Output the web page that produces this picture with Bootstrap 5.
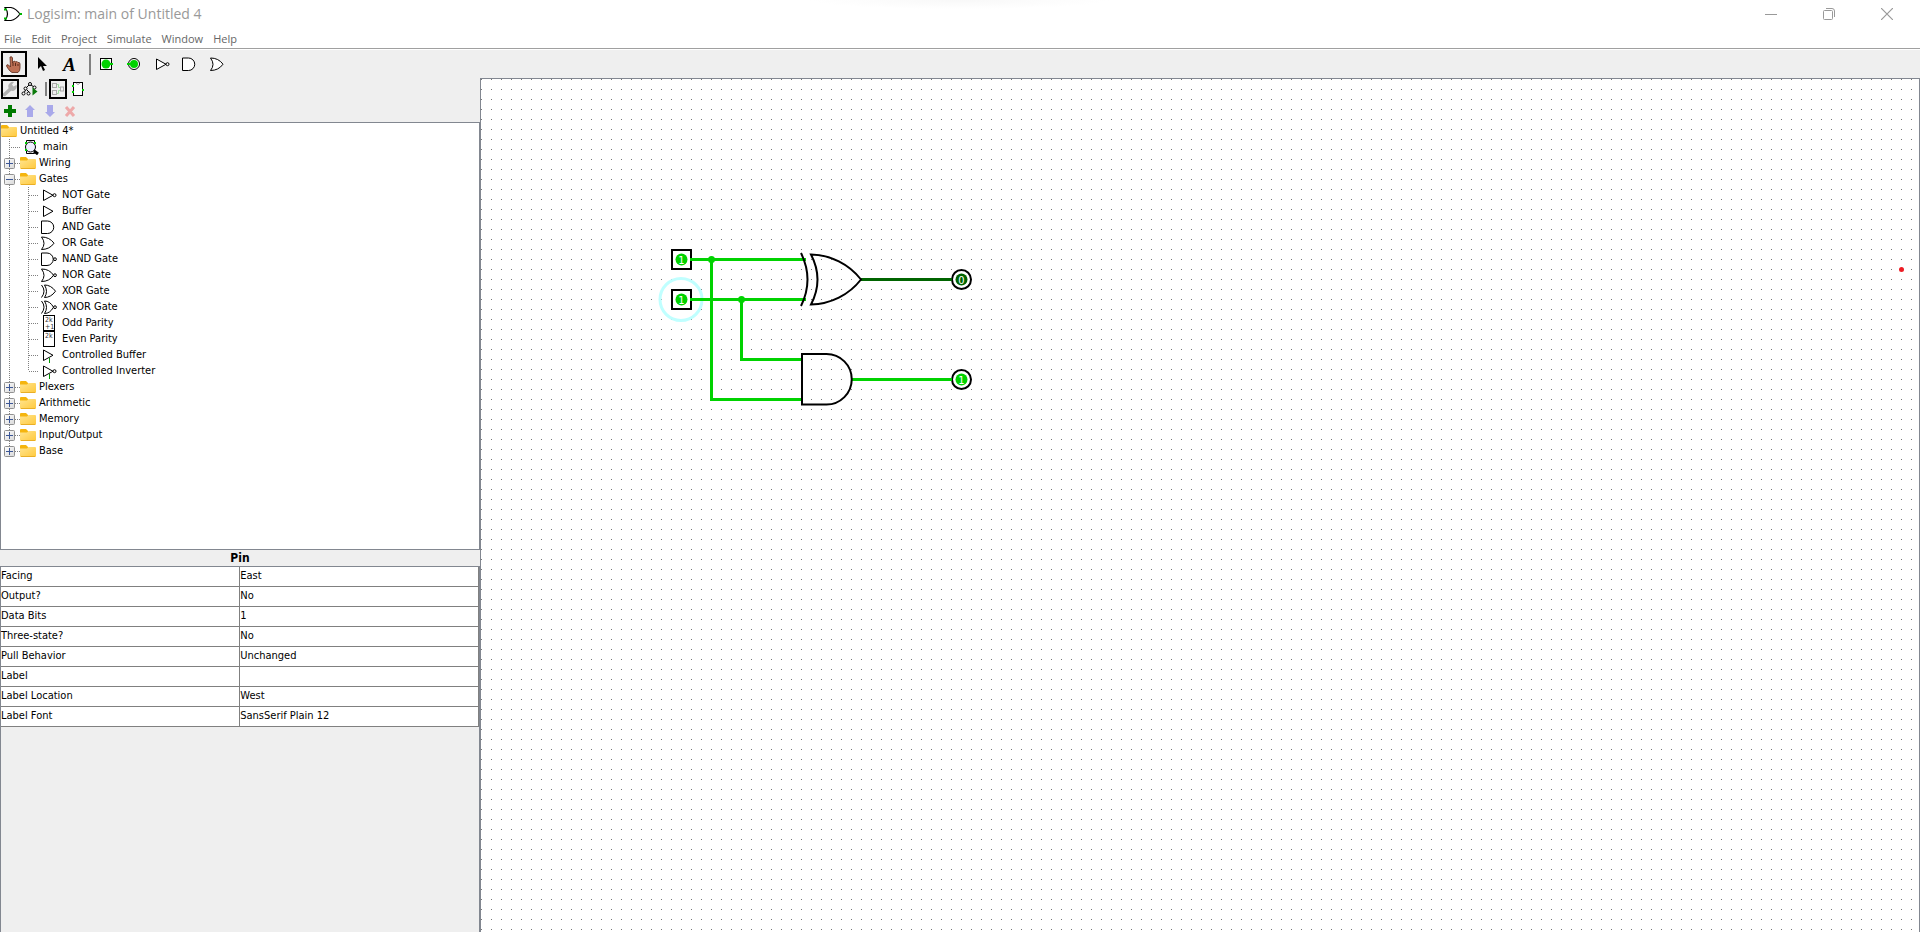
<!DOCTYPE html>
<html lang="en">
<head>
<meta charset="utf-8">
<meta name="viewport" content="width=device-width, initial-scale=1">
<title>Logisim: main of Untitled 4</title>
<link href="https://cdn.jsdelivr.net/npm/bootstrap@5.3.0/dist/css/bootstrap.min.css" rel="stylesheet">
<style>
  :root { --edge: #828790; --panel: #efefef; }
  body { font-family: "DejaVu Sans Condensed", "DejaVu Sans", sans-serif; font-size: 11px; line-height: 16px; color: #000; background: var(--panel); }
  button { font: inherit; color: inherit; background: none; border: 0; padding: 0; }
  svg { display: block; flex: none; }
  .titlebar { height: 28px; font: 14px/28px "Open Sans", sans-serif; color: #999; background: radial-gradient(150px 9px at 50% 0, #f8f8f8, #fff); }
  .winbtn { width: 58px; height: 28px; display: flex; align-items: center; justify-content: center; }
  .menubar { height: 20px; gap: 10px; font: 11px/22px "Open Sans", sans-serif; color: #666; }
  .apphead { border-bottom: 1px solid #a0a0a0; }
  .toolrow { height: 29px; gap: 2px; padding: 1px 1px 0; border-top: 1px solid #fff; }
  .tool { width: 26px; height: 26px; display: flex; align-items: center; justify-content: center; }
  .tool.on, .subtool.on { border: 2px solid #000; }
  .subrow { gap: 2px; padding: 1px 1px 0; }
  .subtool { width: 18px; height: 20px; display: flex; align-items: center; justify-content: center; }
  .editrow { height: 23px; }
  .editrow button { width: 20px; height: 23px; display: flex; align-items: center; justify-content: center; }
  .divider { width: 2px; background: #808080; margin: 3px 0 3px 4px; align-self: stretch; }
  .treebox { background: #fff; border: 1px solid var(--edge); flex: 427 0 0; overflow: hidden; }
  .treebox ul { list-style: none; margin: 0; padding: 0; }
  .node { height: 16px; display: flex; align-items: center; white-space: nowrap; }
  .attrs { flex: 383 0 0; }
  .attrs h2 { font-size: 12px; line-height: 16px; }
  .attrbox { border: 1px solid var(--edge); border-bottom: 0; }
  .attrtable { width: 100%; table-layout: fixed; background: #fff; border-right: 1px solid #808080; }
  .attrtable td, .attrtable th { height: 20px; padding: 0 0 2px; line-height: 17px; font-weight: normal; border-bottom: 1px solid #808080; }
  .attrtable td { border-left: 1px solid #808080; }
  .canvas { background: #fff; border: 1px solid var(--edge); border-bottom: 0; }
  .canvas text { font: 11px "DejaVu Sans Condensed", sans-serif; fill: #fff; text-anchor: middle; }
</style>
</head>
<body>
<svg width="0" height="0" class="position-absolute" aria-hidden="true">
  <defs>
    <linearGradient id="fold" x2="1" y2="1"><stop stop-color="#ffe48f"/><stop offset="1" stop-color="#ffc93c"/></linearGradient>
    <linearGradient id="box" x2="1" y2="1"><stop stop-color="#fff"/><stop offset="1" stop-color="#d8d8d8"/></linearGradient>
    <pattern id="grid" width="10" height="10" patternUnits="userSpaceOnUse"><rect width="1" height="1" fill="#777"/></pattern>
    <g id="folder"><path d="M0 3q0-1 1-1h5l2 2v4H0z" fill="#f5b50e"/><path d="M0 5.500h7l1.500-1.500H15q1 0 1 1v8q0 1-1 1H1q-1 0-1-1z" fill="url(#fold)"/><path d="M1 13.500h14" stroke="#e9ae26"/></g>
    <g id="plus" fill="none"><rect x=".5" y=".5" width="10" height="10" rx="1" fill="url(#box)" stroke="#919191"/><path d="M2 5.500h7M5.500 2v7" stroke="#3c5796"/></g>
    <g id="minus" fill="none"><rect x=".5" y=".5" width="10" height="10" rx="1" fill="url(#box)" stroke="#919191"/><path d="M2 5.500h7" stroke="#3c5796"/></g>
    <g id="not"><path d="M2.500 3v10.500L12 8.250z"/><circle cx="13.500" cy="8.200" r="1.500"/></g>
    <g id="buf"><path d="M2.500 3v10.500L12 8.250z"/></g>
    <g id="and"><path d="M.5 2v12.500h6a6.200 6.200 0 0 0 0-12.500z"/></g>
    <g id="or"><path d="M.5 2q8 0 12.500 6.200Q8.500 14.500 .5 14.500q5-6 0-12.500z"/></g>
    <g id="nand"><path d="M.5 2v12.500h5.500a6.200 6.200 0 0 0 0-12.500z"/><circle cx="14" cy="8.200" r="1.400"/></g>
    <g id="nor"><path d="M.5 2q8 0 12 6.200Q8.500 14.500 .5 14.500q5-6 0-12.500z"/><circle cx="14" cy="8.200" r="1.400"/></g>
    <g id="xor"><path d="M3.500 2Q10 2 14.500 8.200 10 14.500 3.500 14.500q4-6 0-12.500zM.5 2q5 6 0 12.500"/></g>
    <g id="xnor"><path d="M3.500 2q5.500 0 9 6.200-3.500 6.300-9 6.300 4-6 0-12.500zM.5 2q5 6 0 12.500"/><circle cx="14" cy="8.200" r="1.400"/></g>
  </defs>
</svg>

<div class="vh-100 d-flex flex-column overflow-hidden">
  <header class="apphead bg-white">
    <div class="titlebar d-flex align-items-center">
      <svg width="23" height="16" class="ms-1" viewBox="2 0 23 16" fill="none" stroke="#000" stroke-width="1.200"><path d="M3 1.500h6q5 1 9 6.500-4 5.500-9 6.500H3q5-6.500 0-13z"/><path d="M1 3.500h4M1 12.500h4M17.500 8h2.500" stroke="#00b400" stroke-width="2"/></svg>
      <span class="me-auto">Logisim: main of Untitled 4</span>
      <button class="winbtn" aria-label="Minimize"><svg width="12" height="12" stroke="#999"><path d="M0 6.500h12"/></svg></button>
      <button class="winbtn" aria-label="Restore"><svg width="12" height="12" fill="none" stroke="#999"><rect x=".5" y="2.500" width="9" height="9" rx="1"/><path d="M3 .5h6q2.500 0 2.500 2.500v6"/></svg></button>
      <button class="winbtn me-1" aria-label="Close"><svg width="12" height="12" stroke="#999" stroke-width="1.200"><path d="M0 0l12 12M12 0L0 12"/></svg></button>
    </div>
    <nav class="menubar d-flex px-1">
      <button>File</button><button>Edit</button><button>Project</button><button>Simulate</button><button>Window</button><button>Help</button>
    </nav>
  </header>

  <div class="toolrow d-flex align-items-start">
    <button class="tool on" aria-label="Poke"><svg width="18" height="18"><path d="M5 2q2-1 2.500 1v5l1-1.500q1.500-1 2 .5 2-1 2.500.5 2-.5 2 1.500v4q0 3-2 4.500H7q-2-1-4-4L1.500 11q0-2 2-1L5.500 12z" fill="#bd7055" stroke="#5a2a1a" stroke-width=".8"/><path d="M8 8v3M10.500 8v3M13 9v2" stroke="#5a2a1a"/></svg></button>
    <button class="tool" aria-label="Select"><svg width="16" height="18"><path d="M4 2v12l3-3 2 5 2-1-2-4h4z"/></svg></button>
    <button class="tool" aria-label="Text"><svg width="24" height="24"><text x="5" y="19" font-family="Liberation Serif, serif" font-size="19" font-weight="bold" font-style="italic">A</text></svg></button>
    <span class="divider"></span>
    <button class="tool" aria-label="Input pin"><svg width="16" height="16"><rect x="2.500" y="2.500" width="11" height="11" fill="#fff" stroke="#000"/><circle cx="8" cy="8" r="4.500" fill="#00d200"/><path d="M12 8h3" stroke="#00d200" stroke-width="2"/></svg></button>
    <button class="tool" aria-label="Output pin"><svg width="16" height="16"><circle cx="8" cy="8" r="5.500" fill="#fff" stroke="#000"/><circle cx="8" cy="8" r="4" fill="#00d200"/><path d="M1 8h4" stroke="#00d200" stroke-width="2"/></svg></button>
    <button class="tool" aria-label="NOT gate"><svg width="16" height="16" fill="#fff" stroke="#000"><use href="#not"/></svg></button>
    <button class="tool" aria-label="AND gate"><svg width="16" height="16" fill="#fff" stroke="#000"><use href="#and"/></svg></button>
    <button class="tool" aria-label="OR gate"><svg width="16" height="16" fill="#fff" stroke="#000"><use href="#or"/></svg></button>
  </div>

  <main class="row g-0 flex-grow-1 overflow-hidden">
    <aside class="col-3 d-flex flex-column h-100">
      <div class="subrow d-flex">
        <button class="subtool on" aria-label="Show toolbox"><svg width="14" height="16"><path d="M1.500 13.500L8 7.500" stroke="#b0b0b0" stroke-width="3.500" stroke-linecap="round"/><path d="M6 8Q4 4 7 2q2-2 4-1L9 3.500l1.500 2 3-1.500q1 3-1.500 5-2 1.500-4 .5z" fill="#b0b0b0"/></svg></button>
        <button class="subtool" aria-label="Show simulation tree"><svg width="18" height="16" fill="none" stroke="#000"><path d="M8 4L5 7M10 4l3 2M4.500 9L3.500 11M6 9l2 2"/><g fill="#fff"><circle cx="9" cy="3" r="1.500"/><circle cx="4.500" cy="7.500" r="1.500"/><circle cx="2.500" cy="12.500" r="1.500"/><circle cx="7.500" cy="12.500" r="1.500"/><circle cx="13.500" cy="6.500" r="1.500"/></g><path d="M11.500 6.500v8l5-4z" fill="#0a7a0a" stroke="none"/></svg></button>
        <span class="divider"></span>
        <button class="subtool on" aria-label="Edit layout"><svg width="14" height="14" fill="none" stroke="#aaa"><path d="M5.500 2.500h2v3h2M5.500 11.500h2v-3h2" stroke="#9fdc9f"/><rect x="1.500" y="1.500" width="4" height="4"/><rect x="1.500" y="8.500" width="4" height="4"/><rect x="9.500" y="5" width="3" height="4"/></svg></button>
        <button class="subtool" aria-label="Edit appearance"><svg width="14" height="16"><rect x="2.500" y="1.500" width="9" height="13" fill="#fff" stroke="#000"/><path d="M5 2q2 3 4 0" fill="none" stroke="#999"/><path d="M1 5h2M1 11h2M11 9h2" stroke="#00d200" stroke-width="2"/></svg></button>
      </div>
      <div class="editrow d-flex">
        <button aria-label="Add circuit"><svg width="12" height="12"><path d="M6 0v12M0 6h12" stroke="#007a00" stroke-width="4"/></svg></button>
        <button aria-label="Move up"><svg width="10" height="12"><path d="M5 0l5 5H8v7H2V5H0z" fill="#a9a9ea"/></svg></button>
        <button aria-label="Move down"><svg width="10" height="12"><path d="M5 12l5-5H8V0H2v7H0z" fill="#a9a9ea"/></svg></button>
        <button aria-label="Delete circuit"><svg width="12" height="12"><path d="M2 2l8 9M10 2l-8 9" stroke="#eea9a9" stroke-width="3"/></svg></button>
      </div>
      <div class="treebox">
        <ul id="tree"></ul>
      </div>
      <section class="attrs d-flex flex-column">
        <h2 class="m-0 text-center fw-bold">Pin</h2>
        <div class="attrbox flex-grow-1">
          <table class="attrtable">
            <tr><th scope="row">Facing</th><td>East</td></tr>
            <tr><th scope="row">Output?</th><td>No</td></tr>
            <tr><th scope="row">Data Bits</th><td>1</td></tr>
            <tr><th scope="row">Three-state?</th><td>No</td></tr>
            <tr><th scope="row">Pull Behavior</th><td>Unchanged</td></tr>
            <tr><th scope="row">Label</th><td></td></tr>
            <tr><th scope="row">Label Location</th><td>West</td></tr>
            <tr><th scope="row">Label Font</th><td>SansSerif Plain 12</td></tr>
          </table>
        </div>
      </section>
    </aside>
    <section class="col-9 h-100 canvas" aria-label="Circuit">
      <svg width="100%" height="100%" fill="none">
        <rect width="100%" height="100%" fill="url(#grid)"/>
        <circle cx="200" cy="220.500" r="21" stroke="#c0ffff" stroke-width="3"/>
        <g stroke="#000" stroke-width="2"><rect x="191" y="171" width="19" height="19"/><rect x="191" y="211" width="19" height="19"/><circle cx="480.500" cy="200.500" r="9.500" fill="#fff"/><circle cx="480.500" cy="300.500" r="9.500" fill="#fff"/></g>
        <g stroke="#00d200" stroke-width="3"><path d="M209 180.500h116M209 220.500h116M230.500 180v140.500H322M260.500 220v60.500H322M370 300.500h101"/><path d="M379 200.500h92" stroke="#006400"/></g>
        <g fill="#00d200"><circle cx="230.500" cy="180.500" r="3.500"/><circle cx="260.500" cy="220.500" r="3.500"/><circle cx="200.500" cy="180.500" r="6"/><circle cx="200.500" cy="220.500" r="6"/><circle cx="480.500" cy="300.500" r="6"/><circle cx="480.500" cy="200.500" r="6" fill="#006400"/></g>
        <g stroke="#000" stroke-width="2"><path d="M320 174q13 26.500 0 53M330 175.500A65 65 0 0 1 380 200.500 65 65 0 0 1 330 225.500q13-25 0-50z"/><path d="M321 275h24.500a25 25 0 0 1 0 50.500H321z"/></g>
        <text x="200.500" y="184.500">1</text><text x="200.500" y="224.500">1</text><text x="480.500" y="204.500">0</text><text x="480.500" y="304.500">1</text>
        <circle cx="1420.500" cy="190.500" r="2.500" fill="#ed1c24"/>
      </svg>
    </section>
  </main>
</div>
<script>
  const tree = document.getElementById('tree');
  const add = (width, art, label) => tree.insertAdjacentHTML('beforeend',
    `<li><button class="node"><svg width="${width}" height="16" fill="none" stroke="#000">${art}</svg>${label}</button></li>`);
  const dots = d => `<path d="${d}" stroke="#808080" stroke-dasharray="1 1"/>`;
  const branch = (sign, label, last) => add(38,
    dots(last ? 'M8.500 0v8M14 8.500h6' : 'M8.500 0v16M14 8.500h6') +
    `<use href="#${sign}" x="3" y="3"/><g stroke="none"><use href="#folder" x="19"/></g>`, label);
  const leaf = (art, label, last) => add(61,
    dots(`M8.500 0v16M27.500 0v${last ? 8 : 16}M28 8.500h9`) +
    `<g transform="translate(40 0)">${art}</g>`, label);
  const parity = plus => `<rect x="2.500" y=".5" width="11" height="15"/><text x="4" y="7" font-size="7" stroke="none" fill="#333">2k</text>` +
    (plus ? '<text x="4" y="14" font-size="7" stroke="none" fill="#333">+1</text>' : '');
  const ctl = '<path d="M8.500 11v5" stroke="#090"/>';

  add(19, '<g stroke="none"><use href="#folder"/></g>', 'Untitled 4*');
  add(42, dots('M8.500 0v16M10 8.500h9') +
    '<path d="M25.500 1.500h8v13h-8z" fill="#fff"/><circle cx="29.500" cy="8" r="5" fill="#eef"/><path d="M33 12l4 3" stroke-width="3"/><path d="M24 4h2M24 11h2M33 4h2" stroke="#00d200" stroke-width="2"/>', 'main');
  branch('plus', 'Wiring');
  branch('minus', 'Gates');
  [['not','NOT Gate'],['buf','Buffer'],['and','AND Gate'],['or','OR Gate'],['nand','NAND Gate'],['nor','NOR Gate'],['xor','XOR Gate'],['xnor','XNOR Gate']]
    .forEach(([id, label]) => leaf(`<use href="#${id}"/>`, label));
  leaf(parity(true), 'Odd Parity');
  leaf(parity(false), 'Even Parity');
  leaf('<use href="#buf"/>' + ctl, 'Controlled Buffer');
  leaf('<use href="#not"/>' + ctl, 'Controlled Inverter', true);
  ['Plexers', 'Arithmetic', 'Memory', 'Input/Output'].forEach(label => branch('plus', label));
  branch('plus', 'Base', true);
</script>
<script src="https://cdn.jsdelivr.net/npm/bootstrap@5.3.0/dist/js/bootstrap.bundle.min.js"></script>
</body>
</html>
